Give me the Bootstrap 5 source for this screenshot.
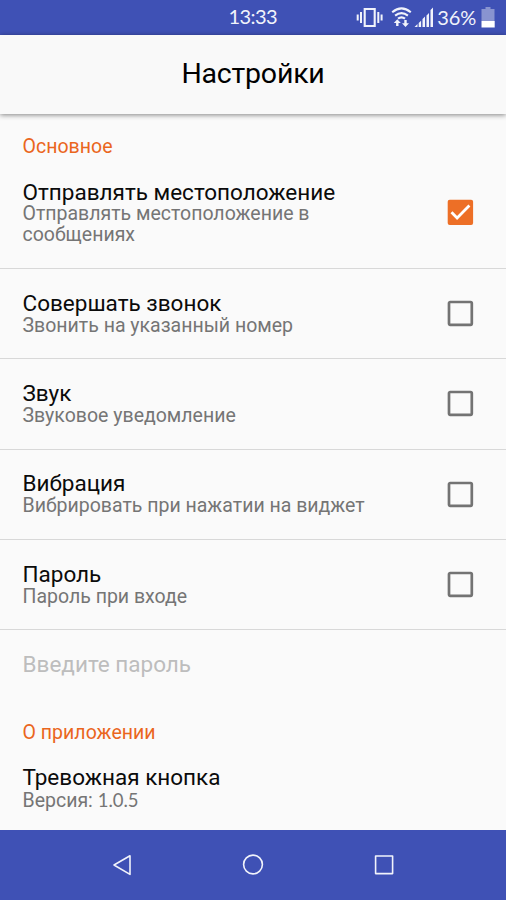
<!DOCTYPE html>
<html lang="ru">
<head>
<meta charset="utf-8">
<meta name="viewport" content="width=device-width, initial-scale=1">
<title>Настройки</title>
<link href="https://cdn.jsdelivr.net/npm/bootstrap@5.3.0/dist/css/bootstrap.min.css" rel="stylesheet">
<style>
body{font-family:Roboto,"Noto Sans",sans-serif;background:#fafafa;color:#0b0b0b;height:900px;overflow:hidden}
.status-bar{height:35px;background:#3f51b5;color:#f1f3fb;display:grid!important;grid-template-columns:228.5px 1fr auto;font-family:Lato,sans-serif;font-size:20px;line-height:33px}
.clock-text{letter-spacing:-.6px}
.battery-text{letter-spacing:-.2px;line-height:32px;padding-bottom:2px}
.app-head{height:79px;background:#f9f9f9;box-shadow:0 1px 5px rgba(0,0,0,.48);padding-bottom:2px}
.app-head h1{font-size:28.5px;letter-spacing:-.2px;line-height:34px;color:#000}
.sect{color:#ea661d;font-size:19.5px;line-height:24px;letter-spacing:.03px;padding:20.8px 22.5px 0}
.opt{border-bottom:1px solid #d8d8d8;padding:22px 32px 22.5px 22.5px;height:90.35px}
.opt-first{height:auto;padding-top:20.8px;padding-bottom:22.7px}
.opt-name{font-size:22.5px;line-height:24.8px}
.opt-info{font-size:19.5px;line-height:20.4px;color:#757575;max-width:350px}
.opt-first .opt-info{max-width:300px}
.tick{width:27px;height:27px}
.opt:not(.opt-first) .tick{margin-top:.6px}
.pass-hint{height:70px;padding:21.6px 22.5px 0;font-size:22.5px;line-height:24px;color:#bdbdbd}
.opt-about{padding-top:20.2px}
.opt-about .opt-name{line-height:25.5px}
.ver{font-family:Lato,sans-serif;font-size:18.5px;line-height:1}
.soft-nav{height:70.5px;background:#3f51b5;padding:0 110px}
</style>
</head>
<body class="d-flex flex-column">
<header class="status-bar flex-shrink-0">
  <span></span><span class="clock-text">13:33</span>
  <div class="d-flex align-items-center">
    <svg width="82" height="35" viewBox="354.5 0 82 35" fill="none" stroke="#f1f3fb">
      <path d="M364.2 9h10v17h-10z" stroke-width="2.1"/>
      <path d="M360.5 12v11M357.2 14.5v6M377.8 12v11M381.1 14.5v6" stroke-width="2"/>
      <path d="M391.7 12.2q9.3-7.6 18.6 0M394.6 15.6q6.4-5.1 12.8 0M397.5 18.7q3.5-2.6 7 0" stroke-width="2.1"/>
      <path d="M396.8 26v-5M405 20v5" stroke-width="2.4"/>
      <path d="M393.3 23l3.5-3.7 3.5 3.7zM401.5 23.3l3.5 3.7 3.5-3.7z" fill="#f1f3fb" stroke="none"/>
      <path d="M414 27l3-3v3zM418.2 27v-4l2.4-2.2V27zM422 27v-8l2.5-2.4V27zM426 27V15.5l2.5-2.5V27zM430 27V10l2.5-2.5V27z" fill="#f1f3fb" stroke="none"/>
    </svg>
    <span class="battery-text">36%</span>
    <svg width="30" height="35" viewBox="476 0 30 35"><path d="M481.5 9h4V7h5v2h4v12h-13z" fill="#8994d0"/><path d="M481.5 21h13.2v6.5h-13.2z" fill="#fff"/></svg>
  </div>
</header>
<div class="app-head d-flex align-items-center justify-content-center flex-shrink-0"><h1 class="m-0 fw-normal">Настройки</h1></div>
<main class="flex-grow-1 overflow-hidden">
  <div class="sect">Основное</div>
  <div class="opt opt-first d-flex justify-content-between align-items-center">
    <div><div class="opt-name">Отправлять местоположение</div><div class="opt-info">Отправлять местоположение в сообщениях</div></div>
    <svg class="tick" viewBox="0 0 27 27"><rect x=".7" y=".7" width="25.4" height="25.4" rx="2" fill="#ed6f26"/><path d="M4.5 13.2l5.6 5.8L22.4 6.6" fill="none" stroke="#fff" stroke-width="2.8"/></svg>
  </div>
  <div class="opt d-flex justify-content-between align-items-center">
    <div><div class="opt-name">Совершать звонок</div><div class="opt-info">Звонить на указанный номер</div></div>
    <svg class="tick" viewBox="0 0 27 27"><rect x="2" y="2" width="22.8" height="22.8" rx="1.2" fill="none" stroke="#737373" stroke-width="2.7"/></svg>
  </div>
  <div class="opt d-flex justify-content-between align-items-center">
    <div><div class="opt-name">Звук</div><div class="opt-info">Звуковое уведомление</div></div>
    <svg class="tick" viewBox="0 0 27 27"><rect x="2" y="2" width="22.8" height="22.8" rx="1.2" fill="none" stroke="#737373" stroke-width="2.7"/></svg>
  </div>
  <div class="opt d-flex justify-content-between align-items-center">
    <div><div class="opt-name">Вибрация</div><div class="opt-info">Вибрировать при нажатии на виджет</div></div>
    <svg class="tick" viewBox="0 0 27 27"><rect x="2" y="2" width="22.8" height="22.8" rx="1.2" fill="none" stroke="#737373" stroke-width="2.7"/></svg>
  </div>
  <div class="opt d-flex justify-content-between align-items-center">
    <div><div class="opt-name">Пароль</div><div class="opt-info">Пароль при входе</div></div>
    <svg class="tick" viewBox="0 0 27 27"><rect x="2" y="2" width="22.8" height="22.8" rx="1.2" fill="none" stroke="#737373" stroke-width="2.7"/></svg>
  </div>
  <div class="pass-hint">Введите пароль</div>
  <div class="sect">О приложении</div>
  <div class="opt opt-first opt-about border-0">
    <div class="opt-name">Тревожная кнопка</div><div class="opt-info">Версия: <span class="ver">1.0.5</span></div>
  </div>
</main>
<nav class="soft-nav d-flex align-items-center justify-content-between flex-shrink-0">
  <svg width="24" height="24" viewBox="0 0 24 24" fill="none" stroke="#f1f3fb" stroke-width="1.6" stroke-linejoin="round"><path d="M4 12l16-9.2v18.6z"/></svg>
  <svg width="24" height="24" viewBox="0 0 24 24" fill="none" stroke="#f1f3fb" stroke-width="1.6"><circle cx="12" cy="11.5" r="9.4"/></svg>
  <svg width="24" height="24" viewBox="0 0 24 24" fill="none" stroke="#f1f3fb" stroke-width="1.6" stroke-linejoin="round"><path d="M3.6 3h17v17.6h-17z"/></svg>
</nav>
<script src="https://cdn.jsdelivr.net/npm/bootstrap@5.3.0/dist/js/bootstrap.bundle.min.js"></script>
</body>
</html>
